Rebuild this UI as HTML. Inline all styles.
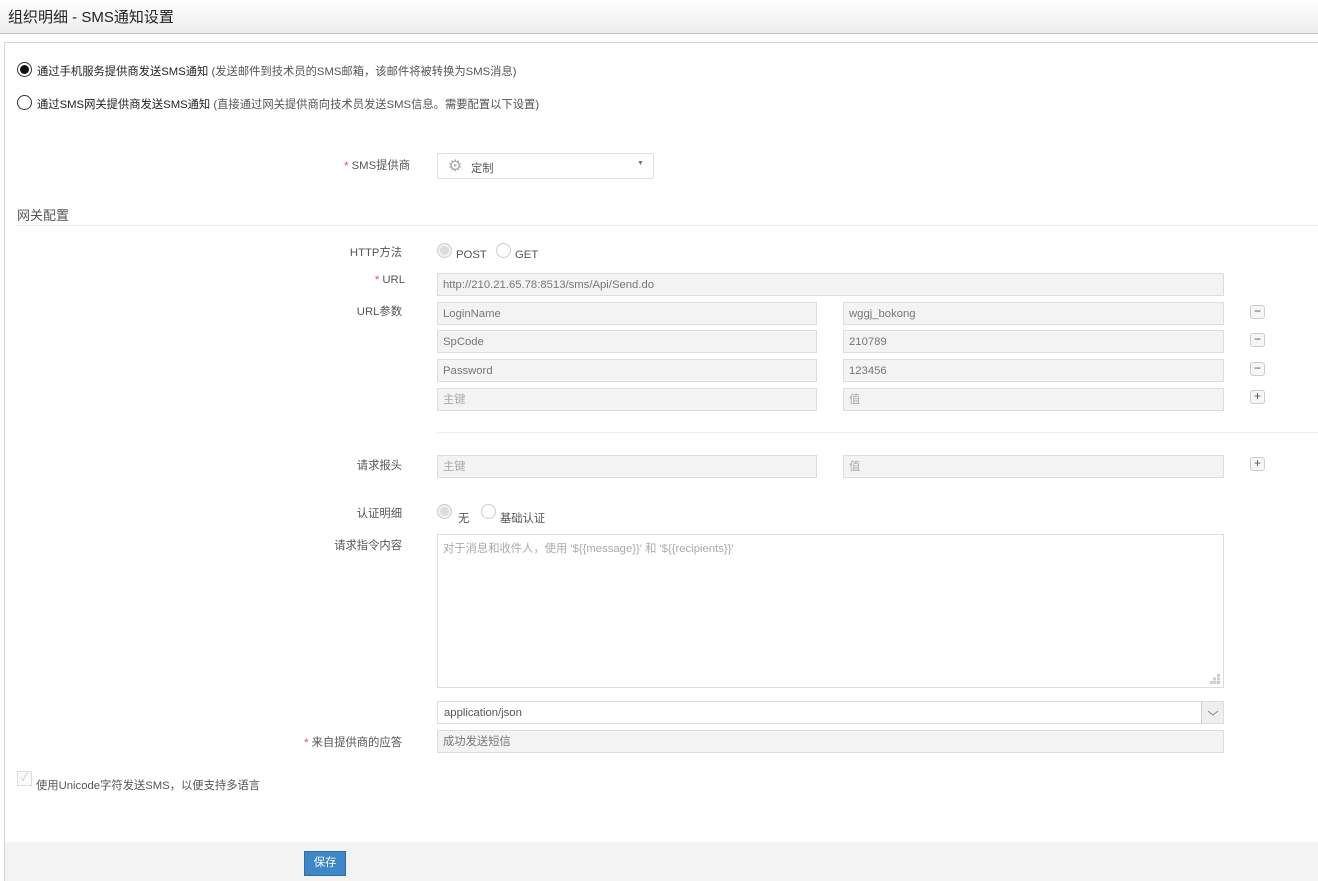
<!DOCTYPE html>
<html><head><meta charset="utf-8"><style>
*{box-sizing:border-box;margin:0;padding:0}
html,body{width:1318px;height:881px;overflow:hidden}
body{background:#fff;font-family:"Liberation Sans","Noto Sans CJK SC",sans-serif;font-size:11.3px;color:#333;position:relative}
.a{position:absolute}
.hdr{left:0;top:0;width:1318px;height:34px;background:linear-gradient(#fff,#ececec);border-bottom:1px solid #c8c8c8}
.hdr span{position:absolute;left:8px;top:6px;font-size:15px;color:#222}
.panel{left:4px;top:42px;width:1320px;height:845px;border:1px solid #d4d4d4;background:#fff}
.foot{left:5px;top:842px;width:1313px;height:39px;background:#f3f3f3}
.lbl{text-align:right;width:200px;color:#555}
.star{color:#d9534f}
.in{height:23px;border:1px solid #ddd;background:#f3f3f3;color:#777;padding:5px 5px 0;line-height:13px}
.ph{color:#aaa}
.btn{width:15px;height:14px;border:1px solid #ccc;border-radius:3px;background:#f6f6f6;color:#555;font-size:12px;line-height:11px;text-align:center}
.rd{width:15px;height:15px;border:1px solid #ccc;border-radius:50%;background:#fff}
.rd.on{background:#ddd;box-shadow:inset 0 0 0 2px #f2f2f2}
</style></head><body>
<div class="a hdr"><span>组织明细 - SMS通知设置</span></div>
<div class="a panel"></div>

<div class="a" style="left:17px;top:62px;width:15px;height:15px;border:1px solid #333;border-radius:50%;background:#fff"><div style="margin:2px;width:9px;height:9px;border-radius:50%;background:#111"></div></div>
<div class="a" style="left:37px;top:63px;color:#222">通过手机服务提供商发送SMS通知 <span style="color:#555">(发送邮件到技术员的SMS邮箱，该邮件将被转换为SMS消息)</span></div>
<div class="a" style="left:17px;top:95px;width:15px;height:15px;border:1px solid #333;border-radius:50%;background:#fff"></div>
<div class="a" style="left:37px;top:96px;color:#222">通过SMS网关提供商发送SMS通知 <span style="color:#555">(直接通过网关提供商向技术员发送SMS信息。需要配置以下设置)</span></div>

<div class="a lbl" style="left:210px;top:157px"><span class="star">*</span> SMS提供商</div>
<div class="a" style="left:437px;top:153px;width:217px;height:26px;border:1px solid #e0e0e0;border-radius:2px;background:#fff">
<span class="a" style="left:10px;top:2px;color:#aaa;font-size:16px">⚙</span><span class="a" style="left:33px;top:6px;color:#555">定制</span><span class="a" style="left:199px;top:6px;color:#777;font-size:7px">▼</span></div>

<div class="a" style="left:17px;top:205px;font-size:13px;color:#555">网关配置</div>
<div class="a" style="left:17px;top:225px;width:1301px;height:1px;background:#eee"></div>

<div class="a lbl" style="left:202px;top:244px">HTTP方法</div>
<div class="a rd on" style="left:437px;top:243px"></div><div class="a" style="left:456px;top:249px;color:#555">POST</div>
<div class="a rd" style="left:496px;top:243px"></div><div class="a" style="left:515px;top:249px;color:#555">GET</div>

<div class="a lbl" style="left:205px;top:274px"><span class="star">*</span> URL</div>
<div class="a in" style="left:437px;top:273px;width:787px">http://210.21.65.78:8513/sms/Api/Send.do</div>

<div class="a lbl" style="left:202px;top:303px">URL参数</div>
<div class="a in" style="left:437px;top:302px;width:380px">LoginName</div><div class="a in" style="left:843px;top:302px;width:381px">wggj_bokong</div><div class="a btn" style="left:1250px;top:305px">−</div>
<div class="a in" style="left:437px;top:330px;width:380px">SpCode</div><div class="a in" style="left:843px;top:330px;width:381px">210789</div><div class="a btn" style="left:1250px;top:333px">−</div>
<div class="a in" style="left:437px;top:359px;width:380px">Password</div><div class="a in" style="left:843px;top:359px;width:381px">123456</div><div class="a btn" style="left:1250px;top:362px">−</div>
<div class="a in ph" style="left:437px;top:388px;width:380px">主键</div><div class="a in ph" style="left:843px;top:388px;width:381px">值</div><div class="a btn" style="left:1250px;top:390px">+</div>

<div class="a" style="left:437px;top:432px;width:881px;height:1px;background:#eee"></div>

<div class="a lbl" style="left:202px;top:457px">请求报头</div>
<div class="a in ph" style="left:437px;top:455px;width:380px">主键</div><div class="a in ph" style="left:843px;top:455px;width:381px">值</div><div class="a btn" style="left:1250px;top:457px">+</div>

<div class="a lbl" style="left:202px;top:505px">认证明细</div>
<div class="a rd on" style="left:437px;top:504px"></div><div class="a" style="left:458px;top:510px;color:#555">无</div>
<div class="a rd" style="left:481px;top:504px"></div><div class="a" style="left:500px;top:510px;color:#555">基础认证</div>

<div class="a lbl" style="left:202px;top:537px">请求指令内容</div>
<div class="a" style="left:437px;top:534px;width:787px;height:154px;border:1px solid #ddd;background:#fff;color:#aaa;padding:5px 5px">对于消息和收件人，使用 '${{message}}' 和 '${{recipients}}'
<svg class="a" style="right:3px;bottom:3px" width="10" height="10"><g fill="#ccc"><rect x="7" y="0" width="3" height="3"/><rect x="3" y="3.5" width="3" height="3"/><rect x="7" y="3.5" width="3" height="3"/><rect x="0" y="7" width="3" height="3"/><rect x="3.5" y="7" width="3" height="3"/><rect x="7" y="7" width="3" height="3"/></g></svg></div>

<div class="a" style="left:437px;top:701px;width:787px;height:23px;border:1px solid #ddd;background:#fff;color:#555;padding:5px 6px">application/json
<div class="a" style="right:0;top:0;width:22px;height:21px;background:#eee;border-left:1px solid #ccc"><svg width="22" height="21"><path d="M6 9l5 4 5-4" stroke="#888" fill="none"/></svg></div></div>

<div class="a lbl" style="left:202px;top:734px"><span class="star">*</span> 来自提供商的应答</div>
<div class="a in" style="left:437px;top:730px;width:787px">成功发送短信</div>

<div class="a" style="left:17px;top:771px;width:15px;height:15px;border:1px solid #ddd;background:#fafafa;color:#ccc;font-size:11px;line-height:13px;text-align:center">✓</div>
<div class="a" style="left:36px;top:777px;color:#555">使用Unicode字符发送SMS，以便支持多语言</div>

<div class="a foot"></div>
<div class="a" style="left:304px;top:851px;width:42px;height:25px;background:#3c87c8;border:1px solid #2f6ea8;color:#fff;text-align:center;line-height:23px">保存</div>
</body></html>
